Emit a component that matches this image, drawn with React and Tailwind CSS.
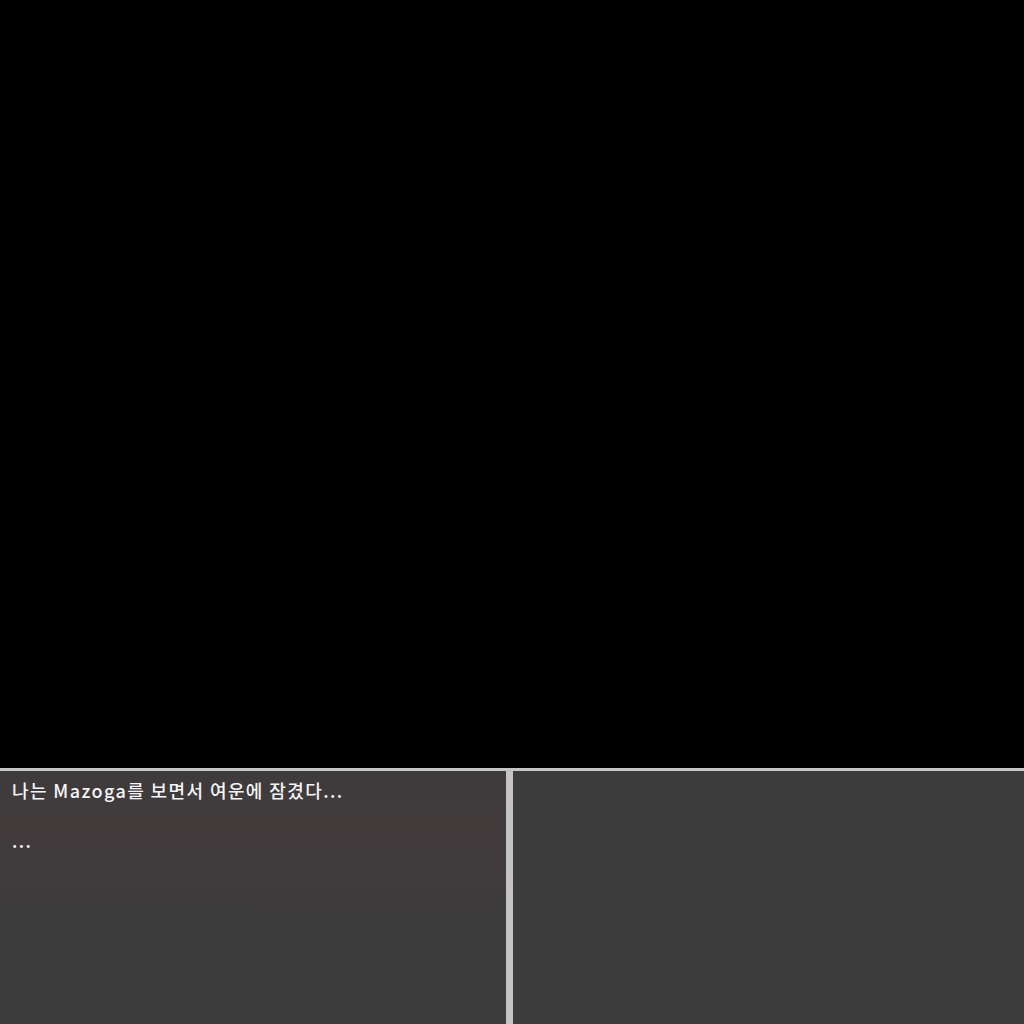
export default function App() {
  return (
    <div className="w-[1024px] h-[1024px] bg-black flex flex-col overflow-hidden">
      <div className="h-[768px] bg-black" />
      <div className="h-[3px] bg-[#c4c4c4]" />
      <div className="flex-1 flex">
        <div
          className="w-[506px] bg-[#3c3c3c] bg-[linear-gradient(to_bottom,#3e3b3c_0%,#413b3c_20%,#403b3c_45%,#3c3c3c_60%)] px-3 pt-[7px] text-[#f4f4f4] text-[18px] font-medium leading-[25px] tracking-[1.4px]"
          style={{ fontFamily: '"Noto Sans CJK KR", "Noto Sans", sans-serif' }}
        >
          <p>나는 Mazoga를 보면서 여운에 잠겼다...</p>
          <p>&nbsp;</p>
          <p>...</p>
        </div>
        <div className="w-[7px] bg-[#c4c4c4]" />
        <div className="flex-1 bg-[#3c3c3c]" />
      </div>
    </div>
  );
}
